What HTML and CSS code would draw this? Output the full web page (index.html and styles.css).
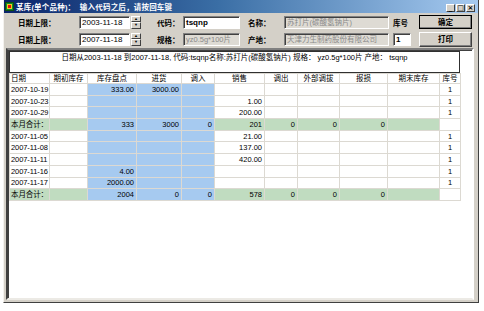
FILE: index.html
```html
<!DOCTYPE html>
<html>
<head>
    <meta charset="UTF-8">
    <title>某库</title>
    <link rel="stylesheet" href="styles.css">
</head>
<body>
    <div class="window">
        <div class="titlebar">
            <span class="app-icon"></span>
            <span class="title">某库(单个品种)：&nbsp;&nbsp;输入代码之后，请按回车键</span>
            <div class="controls">
                <span class="ctl">_</span>
                <span class="ctl">□</span>
                <span class="ctl">×</span>
            </div>
        </div>

        <div class="form">
            <div class="row">
                <label class="lbl lbl-date">日期上限：</label>
                <div class="field date">2003-11-18</div>
                <div class="spin"><span>▲</span><span>▼</span></div>
                <label class="lbl lbl-code">代码：</label>
                <div class="field code bold">tsqnp</div>
                <label class="lbl lbl-name">名称：</label>
                <div class="field wide off">苏打片(碳酸氢钠片)</div>
                <label class="lbl lbl-kh">库号</label>
                <button class="btn default">确定</button>
            </div>
            <div class="row">
                <label class="lbl lbl-date">日期上限：</label>
                <div class="field date">2007-11-18</div>
                <div class="spin"><span>▲</span><span>▼</span></div>
                <label class="lbl lbl-code">规格：</label>
                <div class="field code off">yz0.5g*100片</div>
                <label class="lbl lbl-name">产地：</label>
                <div class="field wide off">天津力生制药股份有限公司</div>
                <div class="field kh">1</div>
                <button class="btn">打印</button>
            </div>
        </div>

        <div class="panel">
            <div class="caption">日期从2003-11-18 到2007-11-18, 代码:tsqnp名称:苏打片(碳酸氢钠片) 规格： yz0.5g*100片 产地： tsqnp</div>
            <table class="grid">
                <colgroup>
                    <col style="width:40px"><col style="width:38px"><col style="width:49px">
                    <col style="width:45px"><col style="width:33px"><col style="width:50px">
                    <col style="width:33px"><col style="width:42px"><col style="width:48px">
                    <col style="width:52px"><col style="width:21px">
                </colgroup>
                <thead>
                    <tr>
                        <th class="left">日期</th><th>期初库存</th><th>库存盘点</th><th>进货</th><th>调入</th>
                        <th>销售</th><th>调出</th><th>外部调拔</th><th>报损</th><th>期末库存</th><th>库号</th>
                    </tr>
                </thead>
                <tbody>
                    <tr><td>2007-10-19</td><td></td><td class="b num">333.00</td><td class="b num">3000.00</td><td class="b"></td><td></td><td></td><td></td><td></td><td></td><td class="c">1</td></tr>
                    <tr><td>2007-10-23</td><td></td><td class="b"></td><td class="b"></td><td class="b"></td><td class="num">1.00</td><td></td><td></td><td></td><td></td><td class="c">1</td></tr>
                    <tr><td>2007-10-29</td><td></td><td class="b"></td><td class="b"></td><td class="b"></td><td class="num">200.00</td><td></td><td></td><td></td><td></td><td class="c">1</td></tr>
                    <tr class="sum"><td>本月合计：</td><td class="g"></td><td class="b num">333</td><td class="b num">3000</td><td class="b num">0</td><td class="g num">201</td><td class="g num">0</td><td class="g num">0</td><td class="g num">0</td><td class="g"></td><td></td></tr>
                    <tr><td>2007-11-05</td><td></td><td class="b"></td><td class="b"></td><td class="b"></td><td class="num">21.00</td><td></td><td></td><td></td><td></td><td class="c">1</td></tr>
                    <tr><td>2007-11-08</td><td></td><td class="b"></td><td class="b"></td><td class="b"></td><td class="num">137.00</td><td></td><td></td><td></td><td></td><td class="c">1</td></tr>
                    <tr><td>2007-11-11</td><td></td><td class="b"></td><td class="b"></td><td class="b"></td><td class="num">420.00</td><td></td><td></td><td></td><td></td><td class="c">1</td></tr>
                    <tr><td>2007-11-16</td><td></td><td class="b num">4.00</td><td class="b"></td><td class="b"></td><td></td><td></td><td></td><td></td><td></td><td class="c">1</td></tr>
                    <tr><td>2007-11-17</td><td></td><td class="b num">2000.00</td><td class="b"></td><td class="b"></td><td></td><td></td><td></td><td></td><td></td><td class="c">1</td></tr>
                    <tr class="sum"><td>本月合计：</td><td class="g"></td><td class="b num">2004</td><td class="b num">0</td><td class="b num">0</td><td class="g num">578</td><td class="g num">0</td><td class="g num">0</td><td class="g num">0</td><td class="g"></td><td></td></tr>
                </tbody>
            </table>
        </div>
    </div>
</body>
</html>
```

FILE: styles.css
```css
:root {
    --face: #d4d0c8;
    --shadow: #808080;
    --dark: #404040;
    --sky: #a6caf0;
    --money: #c0dcc0;
    --line: #dcd9d2;
}

* {
    margin: 0;
    padding: 0;
    box-sizing: border-box;
}

body {
    background: #ffffff;
    font-family: "Liberation Sans", "Noto Sans CJK SC", sans-serif;
    font-size: 8px;
    color: #000;
}

.window {
    margin-left: 3px;
    width: 476px;
    height: 303px;
    background: var(--face);
    border: 1px solid;
    border-color: var(--face) var(--dark) var(--dark) #f4f2ee;
    border-top: none;
}

.titlebar {
    height: 13px;
    display: flex;
    align-items: center;
    background: linear-gradient(to right, #0a246a, #3a6ea5 45%, #a6caf0);
    padding-left: 1px;
}

.app-icon {
    width: 9px;
    height: 9px;
    background: radial-gradient(circle at 50% 50%, #e01010 0 2px, #f0d020 2px 3px, #109030 3px);
    border: 1px solid #0c5010;
    margin-right: 2px;
}

.title {
    color: #fff;
    font-weight: bold;
    font-size: 7.5px;
    letter-spacing: 0.2px;
}

.controls {
    margin-left: auto;
    margin-right: 3px;
    display: flex;
    gap: 1px;
    padding-top: 3px;
}

.ctl {
    width: 9px;
    height: 8px;
    background: var(--face);
    border: 1px solid;
    border-color: #fff var(--dark) var(--dark) #fff;
    font-size: 7px;
    line-height: 6px;
    text-align: center;
    font-weight: bold;
    font-family: "DejaVu Sans", sans-serif;
}

.form {
    height: 35px;
    padding-top: 1px;
}

.row {
    display: flex;
    align-items: center;
    height: 16px;
    margin-bottom: 1px;
}

.lbl {
    font-weight: bold;
    font-size: 7.5px;
    flex-shrink: 0;
}

.lbl-date {
    width: 75px;
    padding-left: 14px;
}

.lbl-code {
    width: 26px;
    margin-left: 16px;
}

.lbl-name {
    width: 36px;
    margin-left: 8px;
}

.lbl-kh {
    width: 18px;
    margin-left: 4px;
}

.field {
    flex-shrink: 0;
    height: 13px;
    background: #fff;
    border: 1px solid;
    border-color: var(--shadow) #fff #fff var(--shadow);
    box-shadow: inset 1px 1px 0 var(--dark);
    padding: 1px 0 0 2px;
    font-size: 8px;
    line-height: 10px;
    white-space: nowrap;
    overflow: hidden;
}

.date {
    width: 51px;
}

.code {
    width: 57px;
}

.wide {
    width: 105px;
}

.kh {
    width: 18px;
    margin-left: 4px;
    font-weight: bold;
}

.bold {
    font-weight: bold;
}

.off {
    background: #dedbd4;
    color: #8a8a8a;
    font-size: 7.5px;
}

.spin {
    flex-shrink: 0;
    width: 10px;
    height: 13px;
    margin-left: 1px;
    display: flex;
    flex-direction: column;
}

.spin span {
    flex: 1;
    background: var(--face);
    border: 1px solid;
    border-color: #fff var(--dark) var(--dark) #fff;
    font-size: 4px;
    line-height: 4px;
    text-align: center;
    color: #000;
}

.btn {
    flex-shrink: 0;
    width: 53px;
    height: 14px;
    margin-left: 8px;
    background: var(--face);
    border: 1px solid;
    border-color: #fff var(--dark) var(--dark) #fff;
    box-shadow: inset -1px -1px 0 var(--shadow);
    font-family: inherit;
    font-weight: bold;
    font-size: 7.5px;
    line-height: 11px;
}

.btn.default {
    outline: 1px solid #000;
    outline-offset: -1px;
}

.row:last-child .btn {
    height: 15px;
}

.panel {
    margin: 0 4px 0 2px;
    height: 252px;
    background: #fff;
    border: 2px solid;
    border-color: var(--shadow) #fff #eceae5 var(--dark);
    box-shadow: inset 1px 1px 0 var(--dark);
    padding: 1px 0 0 1px;
}

.caption {
    width: 451px;
    height: 22px;
    border: 1px solid #303030;
    text-align: center;
    font-size: 7.5px;
    line-height: 9px;
    padding-top: 1px;
    white-space: nowrap;
}

.grid {
    width: 451px;
    border-collapse: collapse;
    table-layout: fixed;
    font-size: 7.5px;
}

.grid th,
.grid td {
    border: 1px solid var(--line);
    height: 11.7px;
    padding: 0 2px;
    white-space: nowrap;
    overflow: hidden;
    font-weight: normal;
    line-height: 9px;
}

.grid th {
    height: 10px;
    text-align: center;
}

.grid th.left {
    text-align: left;
}

.grid td {
    font-size: 7.5px;
}

.grid td:first-child,
.grid th:first-child {
    padding: 0 0 0 1px;
    letter-spacing: -0.1px;
}

.grid .b {
    background: var(--sky);
}

.grid .g,
.grid .sum td:first-child {
    background: var(--money);
}

.grid .num {
    text-align: right;
}

.grid .c {
    text-align: center;
}
```
